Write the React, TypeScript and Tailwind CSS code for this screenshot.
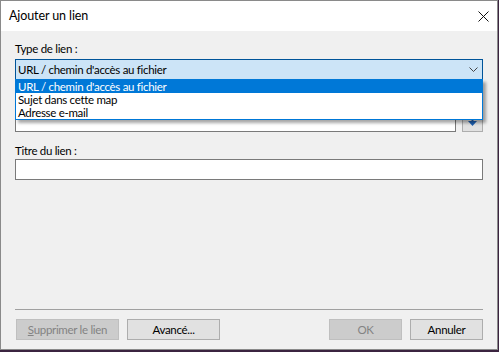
import { useState } from 'react';

const OPTIONS = ["URL / chemin d'accès au fichier", 'Sujet dans cette map', 'Adresse e-mail'];

function Button({ children, disabled, w }: { children: React.ReactNode; disabled?: boolean; w: string }) {
  return (
    <button
      disabled={disabled}
      className={`${w} h-[21px] border leading-none flex items-center justify-center ${
        disabled ? 'bg-[#cccccc] border-[#bfbfbf] text-[#838383]' : 'bg-[#e1e1e1] border-[#adadad] text-black'
      }`}
    >
      {children}
    </button>
  );
}

export default function App() {
  const [selected] = useState(0);

  return (
    <div
      className="w-[499px] h-[352px] bg-[#3b2440] overflow-hidden text-[11.5px] tracking-[-0.3px]"
      style={{ fontFamily: "'Segoe UI', Lato, sans-serif" }}
    >
      <div className="w-[498px] h-[350px] border border-[#8a8a8a] bg-[#f0f0f0] flex flex-col">
        {/* title bar */}
        <div className="h-[30px] bg-white flex items-center justify-between pl-[8px] pr-[8px]">
          <span className="text-[12.5px] tracking-[-0.1px] text-black">Ajouter un lien</span>
          <svg width="11" height="11" viewBox="0 0 11 11" className="mt-[1px]">
            <path d="M0.5 0.5 L10.5 10.5 M10.5 0.5 L0.5 10.5" stroke="#111" strokeWidth="1" />
          </svg>
        </div>

        <div className="flex-1 flex flex-col px-[14px] leading-[16px] text-black">
          <div className="mt-[10px]">Type de lien :</div>

          <div className="relative mt-[2px]">
            <div className="h-[21px] bg-[#cce4f7] border border-[#005499] flex items-center justify-between pl-[2px] pr-[4px]">
              <span>{OPTIONS[selected]}</span>
              <svg width="9" height="5" viewBox="0 0 9 5">
                <path d="M0.5 0.5 L4.5 4.5 L8.5 0.5" stroke="#444" fill="none" strokeWidth="1" />
              </svg>
            </div>

            {/* open list */}
            <div className="absolute left-0 right-0 top-[20px] z-10 bg-white border border-[#0078d7] shadow-[3px_3px_3px_rgba(0,0,0,0.35)] flex flex-col">
              {OPTIONS.map((o, i) => (
                <div
                  key={o}
                  className={`h-[13px] leading-[13px] pl-[2px] ${i === selected ? 'bg-[#0078d7] text-white' : ''}`}
                >
                  {o}
                </div>
              ))}
            </div>
          </div>

          {/* path field, covered by the open list */}
          <div className="mt-[31px] flex gap-[6px]">
            <div className="flex-1 h-[21px] bg-white border border-[#7a7a7a]" />
            <div className="w-[21px] h-[21px] border border-[#adadad] bg-[#e1e1e1] flex items-center justify-center">
              <svg width="9" height="11" viewBox="0 0 9 11">
                <path d="M4.5 0 V6" stroke="#1c5fb0" strokeWidth="2" />
                <path d="M0 5 H9 L4.5 10 Z" fill="#1c5fb0" />
              </svg>
            </div>
          </div>

          <div className="mt-[11px]">Titre du lien :</div>
          <div className="h-[21px] bg-white border border-[#7a7a7a]" />

          <div className="flex-1" />
          <div className="h-px bg-[#a0a0a0]" />
          <div className="mt-[9px] mb-[9px] flex items-center pl-[1px]">
            <Button w="w-[103px]" disabled>
              <span>
                <span className="underline">S</span>upprimer le lien
              </span>
            </Button>
            <div className="w-[8px]" />
            <Button w="w-[93px]">Avancé...</Button>
            <div className="flex-1" />
            <Button w="w-[73px]" disabled>
              OK
            </Button>
            <div className="w-[8px]" />
            <Button w="w-[73px]">Annuler</Button>
          </div>
        </div>
      </div>
    </div>
  );
}
